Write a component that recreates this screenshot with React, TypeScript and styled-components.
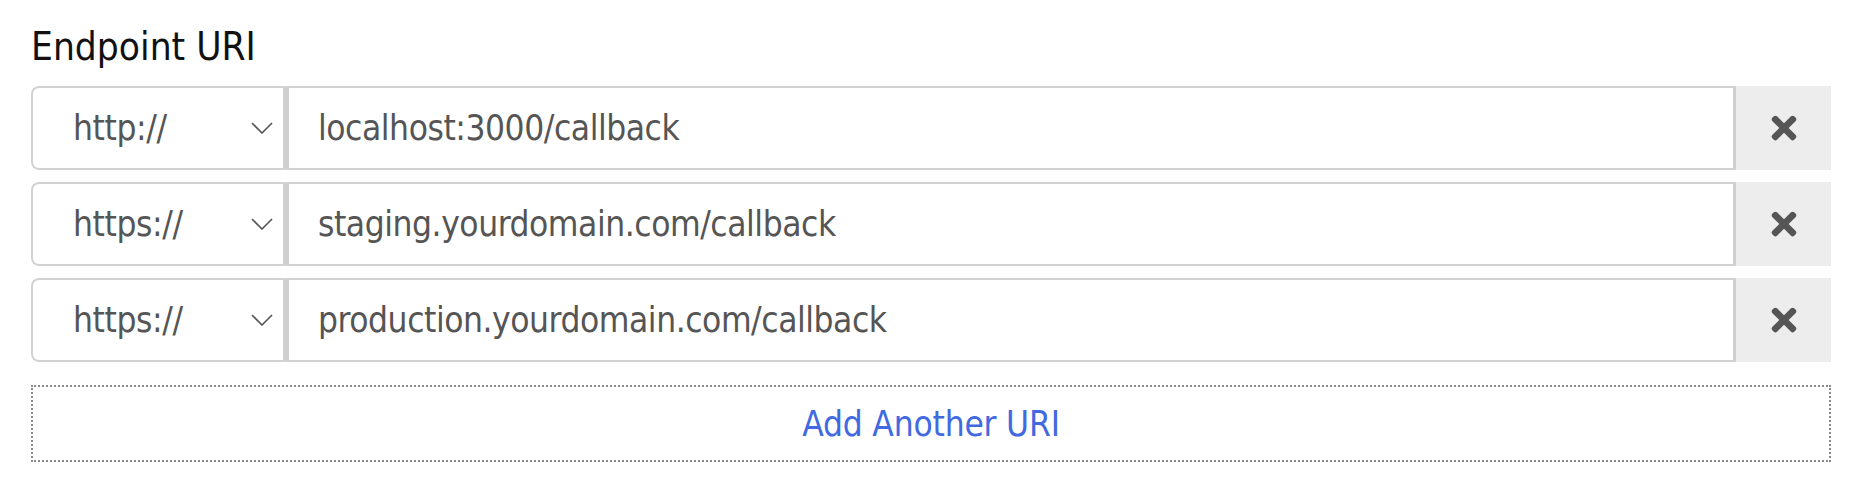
import React from "react";
import styled, { createGlobalStyle } from "styled-components";
import { FaTimes } from "react-icons/fa";

type Endpoint = { scheme: string; host: string };

const endpoints: Endpoint[] = [
    { scheme: "http://", host: "localhost:3000/callback" },
    { scheme: "https://", host: "staging.yourdomain.com/callback" },
    { scheme: "https://", host: "production.yourdomain.com/callback" },
];

const App = () => {
    return (
        <>
            <GlobalStyle />
            <Page>
                <Title>Endpoint URI</Title>
                <List>
                    {endpoints.map((item, i) => (
                        <Row key={i}>
                            <SchemeBox>
                                <Scheme defaultValue={item.scheme}>
                                    <option value="http://">http://</option>
                                    <option value="https://">https://</option>
                                </Scheme>
                                <Chevron width="22" height="12" viewBox="0 0 22 12">
                                    <path d="M1 1 L11 11 L21 1" fill="none" stroke="#555" strokeWidth="1.6" />
                                </Chevron>
                            </SchemeBox>
                            <Host defaultValue={item.host} />
                            <Remove aria-label="Remove">
                                <FaTimes />
                            </Remove>
                        </Row>
                    ))}
                </List>
                <AddButton>Add Another URI</AddButton>
            </Page>
        </>
    )
}

export default App

const GlobalStyle = createGlobalStyle`
    body {
        margin: 0;
        background: #fff;
        font-family: "DejaVu Sans Condensed", "DejaVu Sans", sans-serif;
    }
`
const Page = styled.div`
    width: 1800px;
    padding: 22px 0 0 31px;
`
const Title = styled.div`
    font-size: 38.5px;
    line-height: 50px;
    color: #111;
    margin-bottom: 14px;
`
const List = styled.div`
    display: flex;
    flex-direction: column;
    gap: 12px;
`
const Row = styled.div`
    display: flex;
    height: 84px;
`
const SchemeBox = styled.div`
    position: relative;
    width: 255px;
    flex: none;
`
const Scheme = styled.select`
    appearance: none;
    width: 100%;
    height: 100%;
    box-sizing: border-box;
    border: 2px solid #d2d2d2;
    border-right: 3px solid #cfcfcf;
    border-radius: 8px 0 0 8px;
    background: #fff;
    padding: 0 0 0 40px;
    font: inherit;
    font-size: 35px;
    letter-spacing: -0.4px;
    color: #555;
    outline: none;
`
const Chevron = styled.svg`
    position: absolute;
    right: 13px;
    top: 36px;
    pointer-events: none;
`
const Host = styled.input`
    flex: 1;
    min-width: 0;
    height: 100%;
    box-sizing: border-box;
    border: 2px solid #d2d2d2;
    border-left: 3px solid #cfcfcf;
    border-right: 3px solid #cfcfcf;
    padding: 0 0 0 29px;
    font: inherit;
    font-size: 35px;
    letter-spacing: -0.45px;
    color: #555;
    outline: none;
`
const Remove = styled.button`
    width: 95px;
    flex: none;
    border: none;
    background: #ededed;
    color: #555;
    display: flex;
    align-items: center;
    justify-content: center;
    font-size: 36px;
    padding: 0;
    cursor: pointer;
`
const AddButton = styled.button`
    display: block;
    width: 100%;
    height: 77px;
    margin-top: 23px;
    box-sizing: border-box;
    border: 2px dotted #8a8a8a;
    background: #fff;
    color: #4169e1;
    font: inherit;
    font-size: 35px;
    letter-spacing: -0.2px;
    cursor: pointer;
`
